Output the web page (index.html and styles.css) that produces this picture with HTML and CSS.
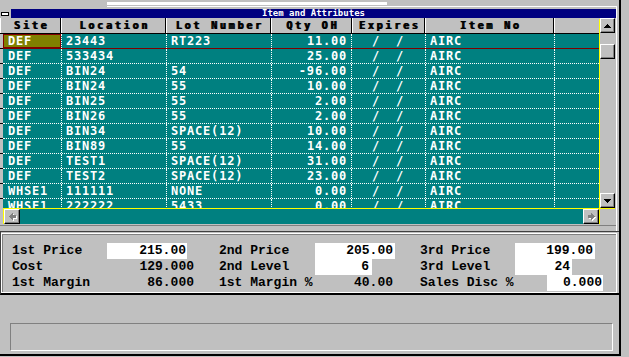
FILE: index.html
```html
<!DOCTYPE html>
<html>
<head>
<meta charset="utf-8">
<link rel="stylesheet" href="styles.css">
</head>
<body>
<div class="window">
  <div class="top">
    <div class="topbar"></div>
    <div class="topline"></div>
  </div>
  <div class="gap edge"></div>
  <div class="titlerow edge">
    <div class="sysbox"><span class="sysbar"></span></div>
    <div class="title">Item and Attributes</div>
  </div>
  <div class="grid edge">
    <div class="gmain">
      <div class="ghead">
        <div class="h w1">Site</div>
        <div class="h w2">Location</div>
        <div class="h w3">Lot Number</div>
        <div class="h w4">Qty OH</div>
        <div class="h w5">Expires</div>
        <div class="h w6">Item No</div>
        <div class="h w7"></div>
      </div>
      <div class="gbody">
        <div class="rowhdr">
          <div class="rh"></div><div class="rh"></div><div class="rh"></div><div class="rh"></div>
          <div class="rh"></div><div class="rh"></div><div class="rh"></div><div class="rh"></div>
          <div class="rh"></div><div class="rh"></div><div class="rh"></div><div class="rh"></div>
        </div>
        <div class="rows">
          <div class="r sel"><div class="c c1 cur">DEF</div><div class="c c2">23443</div><div class="c c3">RT223</div><div class="c c4">11.00</div><div class="c c5">  /  /</div><div class="c c6">AIRC</div><div class="c c7"></div></div>
          <div class="r"><div class="c c1">DEF</div><div class="c c2">533434</div><div class="c c3"></div><div class="c c4">25.00</div><div class="c c5">  /  /</div><div class="c c6">AIRC</div><div class="c c7"></div></div>
          <div class="r"><div class="c c1">DEF</div><div class="c c2">BIN24</div><div class="c c3">54</div><div class="c c4">-96.00</div><div class="c c5">  /  /</div><div class="c c6">AIRC</div><div class="c c7"></div></div>
          <div class="r"><div class="c c1">DEF</div><div class="c c2">BIN24</div><div class="c c3">55</div><div class="c c4">10.00</div><div class="c c5">  /  /</div><div class="c c6">AIRC</div><div class="c c7"></div></div>
          <div class="r"><div class="c c1">DEF</div><div class="c c2">BIN25</div><div class="c c3">55</div><div class="c c4">2.00</div><div class="c c5">  /  /</div><div class="c c6">AIRC</div><div class="c c7"></div></div>
          <div class="r"><div class="c c1">DEF</div><div class="c c2">BIN26</div><div class="c c3">55</div><div class="c c4">2.00</div><div class="c c5">  /  /</div><div class="c c6">AIRC</div><div class="c c7"></div></div>
          <div class="r"><div class="c c1">DEF</div><div class="c c2">BIN34</div><div class="c c3">SPACE(12)</div><div class="c c4">10.00</div><div class="c c5">  /  /</div><div class="c c6">AIRC</div><div class="c c7"></div></div>
          <div class="r"><div class="c c1">DEF</div><div class="c c2">BIN89</div><div class="c c3">55</div><div class="c c4">14.00</div><div class="c c5">  /  /</div><div class="c c6">AIRC</div><div class="c c7"></div></div>
          <div class="r"><div class="c c1">DEF</div><div class="c c2">TEST1</div><div class="c c3">SPACE(12)</div><div class="c c4">31.00</div><div class="c c5">  /  /</div><div class="c c6">AIRC</div><div class="c c7"></div></div>
          <div class="r"><div class="c c1">DEF</div><div class="c c2">TEST2</div><div class="c c3">SPACE(12)</div><div class="c c4">23.00</div><div class="c c5">  /  /</div><div class="c c6">AIRC</div><div class="c c7"></div></div>
          <div class="r"><div class="c c1">WHSE1</div><div class="c c2">111111</div><div class="c c3">NONE</div><div class="c c4">0.00</div><div class="c c5">  /  /</div><div class="c c6">AIRC</div><div class="c c7"></div></div>
          <div class="r"><div class="c c1">WHSE1</div><div class="c c2">222222</div><div class="c c3">5433</div><div class="c c4">0.00</div><div class="c c5">  /  /</div><div class="c c6">AIRC</div><div class="c c7"></div></div>
        </div>
      </div>
      <div class="hyel"></div>
      <div class="hscroll">
        <div class="hs-pad"></div>
        <div class="hs-yel"></div>
        <div class="btn hbtn">
          <svg width="8" height="8" viewBox="0 0 8 8" shape-rendering="crispEdges">
            <path fill="#fff" d="M4 1h1v7h-1z M3 2h1v5h-1z M2 3h1v3h-1z M1 4h1v1h-1z M5 3h3v3h-3z"/>
            <path fill="#808080" d="M3 0h1v7h-1z M2 1h1v5h-1z M1 2h1v3h-1z M0 3h1v1h-1z M4 2h3v3h-3z"/>
          </svg>
        </div>
        <div class="htrack"></div>
        <div class="btn hbtn">
          <svg width="8" height="8" viewBox="0 0 8 8" shape-rendering="crispEdges">
            <path fill="#fff" d="M4 1h1v7h-1z M5 2h1v5h-1z M6 3h1v3h-1z M7 4h1v1h-1z M1 3h3v3h-3z"/>
            <path fill="#808080" d="M3 0h1v7h-1z M4 1h1v5h-1z M5 2h1v3h-1z M6 3h1v1h-1z M0 2h3v3h-3z"/>
          </svg>
        </div>
      </div>
    </div>
    <div class="vyel"></div>
    <div class="vscroll">
      <div class="btn vbtn">
        <svg width="7" height="4" viewBox="0 0 7 4" shape-rendering="crispEdges"><path fill="#000" d="M3 0h1v1h-1z M2 1h3v1h-3z M1 2h5v1h-5z M0 3h7v1h-7z"/></svg>
      </div>
      <div class="vtrack"><div class="btn thumb"></div></div>
      <div class="btn vbtn">
        <svg width="7" height="4" viewBox="0 0 7 4" shape-rendering="crispEdges"><path fill="#000" d="M0 0h7v1h-7z M1 1h5v1h-5z M2 2h3v1h-3z M3 3h1v1h-1z"/></svg>
      </div>
      <div class="vyel2"></div>
      <div class="vfill"></div>
    </div>
  </div>
  <div class="sep edge"><div class="sepline"></div></div>
  <div class="panel">
    <div class="pin">
      <div class="pgrid">
        <span class="lbl">1st Price</span><span class="val"><span class="box wh b80 p1">215.00</span></span>
        <span class="lbl">2nd Price</span><span class="val"><span class="box wh b80 p2">205.00</span></span>
        <span class="lbl">3rd Price</span><span class="val"><span class="box wh b80 p2">199.00</span></span>

        <span class="lbl">Cost</span><span class="val"><span class="box b87">129.000</span></span>
        <span class="lbl">2nd Level</span><span class="val"><span class="box wh b57 p3">6</span></span>
        <span class="lbl">3rd Level</span><span class="val"><span class="box wh b57 p2">24</span></span>

        <span class="lbl">1st Margin</span><span class="val"><span class="box b87">86.000</span></span>
        <span class="lbl">1st Margin %</span><span class="val"><span class="box b80 p2">40.00</span></span>
        <span class="lbl">Sales Disc %</span><span class="val"><span class="box wh b56 p1 shift">0.000</span></span>
      </div>
    </div>
  </div>
  <div class="status">
    <div class="statusbox"></div>
  </div>
</div>
</body>
</html>
```
FILE: styles.css
```css
* { box-sizing: border-box; margin: 0; padding: 0; }
html, body { width: 629px; height: 357px; overflow: hidden; }
body { background: #c0c0c0; font-family: "DejaVu Sans Mono", monospace; }

.window {
  width: 621px; height: 356px;
  border-right: 2px solid #000; border-bottom: 2px solid #000;
  display: flex; flex-direction: column;
}
.edge { width: 617px; border-right: 1px solid #fff; flex: none; }

.top { height: 7px; padding-top: 2px; flex: none; }
.topbar { margin-left: 107px; width: 280px; height: 3px; background: #fff; }
.topline { margin-left: 107px; width: 510px; height: 1px; margin-top: 1px; background: #fff; }
.gap { height: 2px; }

.titlerow { height: 9px; display: flex; }
.sysbox { width: 10px; margin-right: 1px; display: flex; align-items: center; justify-content: center; }
.sysbar { width: 8px; height: 4px; background: #fff; border: 1px solid #000; }
.title {
  width: 605px; background: #000080; color: #fff;
  font: bold 9px/9px "DejaVu Sans Mono", monospace; text-align: center;
}

.grid { height: 206px; display: flex; }
.gmain { width: 599px; display: flex; flex-direction: column; flex: none; }
.ghead { height: 16px; display: flex; border-bottom: 1px solid #000; flex: none; }
.h {
  height: 15px; border-left: 1px solid #fff; border-right: 1px solid #000;
  font: bold 10px/15px "DejaVu Sans Mono", monospace; letter-spacing: 2.8px;
  text-align: center; padding-left: 2px; color: #000; text-shadow: 1px 0 0 #000;
  white-space: nowrap; flex: none;
}
.w1 { width: 61px; } .w2 { width: 105px; } .w3 { width: 105px; } .w4 { width: 81px; }
.w5 { width: 73px; } .w6 { width: 129px; } .w7 { width: 45px; border-right: 0; }

.gbody { height: 174px; display: flex; overflow: hidden; background: #008080; flex: none; }
.rowhdr { width: 3px; background: #c0c0c0; flex: none; }
.rh { height: 15px; border-bottom: 1px solid #000; }
.rows { width: 596px; flex: none; }
.r { display: flex; height: 15px; border-bottom: 1px dotted #fff; }
.r.sel { border-bottom: 1px solid #800000; }
.c {
  height: 14px; border-right: 1px dotted #fff; color: #fff;
  font: bold 12px/14px "DejaVu Sans Mono", monospace; letter-spacing: 0.8px;
  white-space: pre; padding-left: 4px; overflow: hidden; flex: none;
}
.c1 { width: 59px; padding-left: 5px; }
.c2 { width: 105px; }
.c3 { width: 105px; }
.c4 { width: 80px; text-align: right; padding-left: 0; padding-right: 4px; }
.c5 { width: 74px; }
.c6 { width: 129px; }
.c7 { width: 44px; border-right: 0; }
.cur { background: #808000; background-clip: padding-box; box-shadow: inset 0 0 0 1px #800000; }

.hyel { height: 1px; margin-left: 3px; background: #ff0; flex: none; }
.hscroll { height: 15px; display: flex; flex: none; }
.hs-pad { width: 3px; }
.hs-yel { width: 1px; background: #ff0; }
.htrack { flex: 1; background: #008080; }

.btn {
  background: #c0c0c0;
  border-top: 1px solid #fff; border-left: 1px solid #fff;
  border-right: 1px solid #000; border-bottom: 1px solid #000;
  box-shadow: inset -1px -1px 0 #808080;
  display: flex; align-items: center; justify-content: center;
  flex: none;
}
.hbtn { width: 16px; height: 15px; }
.hbtn svg { margin-left: 1px; }

.vyel { width: 1px; margin-top: 1px; background: #ff0; height: 205px; flex: none; }
.vscroll { width: 15px; display: flex; flex-direction: column; flex: none; }
.vbtn { height: 15px; }
.vtrack { height: 160px; padding-top: 11px; }
.thumb { height: 15px; }
.vyel2 { height: 1px; background: #ff0; }
.vfill { height: 15px; }

.sep { height: 7px; padding-top: 1px; }
.sepline { height: 1px; background: #808080; border-bottom: 0; }

.panel {
  width: 619px; height: 64px; flex: none;
  border-top: 1px solid #404040; border-left: 1px solid #404040;
  border-bottom: 2px solid #000;
  padding-top: 1px; padding-right: 2px;
}
.pin { height: 100%; border: 1px solid #fff; border-top-color: #fff; }
.pgrid {
  height: 100%;
  border-top: 1px solid #808080; border-left: 1px solid #808080;
  padding: 8px 0 0 9px;
  display: grid;
  grid-template-columns: 95px 112px 96px 105px 95px 1fr;
  grid-auto-rows: 16px;
  font: bold 13px/16px "Liberation Mono", monospace; color: #000;
}
.lbl { white-space: pre; }
.box { display: block; height: 16px; text-align: right; white-space: pre; }
.wh { background: #fff; }
.b80 { width: 80px; } .b87 { width: 87px; } .b57 { width: 57px; } .b56 { width: 56px; }
.p1 { padding-right: 1px; } .p2 { padding-right: 2px; } .p3 { padding-right: 3px; }
.shift { margin-left: 32px; }

.status { height: 59px; flex: none; padding: 28px 0 0 10px; }
.statusbox {
  width: 603px; height: 28px;
  border-top: 1px solid #808080; border-left: 1px solid #808080;
  border-right: 1px solid #fff; border-bottom: 1px solid #fff;
}
```
